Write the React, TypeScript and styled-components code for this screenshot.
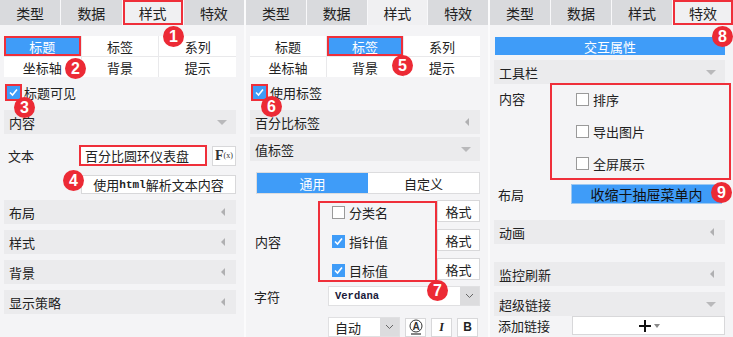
import React from 'react';
import styled, { createGlobalStyle, css } from 'styled-components';

const RED = '#ef2f3a';
const BLUE = '#3f9cf8';

const GlobalStyle = createGlobalStyle`
  body {
    margin: 0;
    background: #fbfbfc;
    font-family: 'Noto Sans CJK SC', 'Noto Sans', sans-serif;
    font-size: 13px;
    color: #222;
  }
`;

const marked = css`
  box-shadow: inset 0 0 0 2px ${RED};
`;

const Screen = styled.div`
  display: flex;
  gap: 2px;
  width: 733px;
  height: 337px;
  overflow: hidden;
`;

const Panel = styled.div<{ $w: number }>`
  position: relative;
  width: ${({ $w }) => $w}px;
  height: 337px;
  flex-shrink: 0;
  background: #f4f4f6;
  display: flex;
  flex-direction: column;
`;

const TabBar = styled.div`
  display: grid;
  grid-template-columns: repeat(4, 1fr);
  gap: 1px;
  height: 25px;
  background: #f8f8fa;
`;

const Tab = styled.div<{ $active?: boolean; $marked?: boolean }>`
  display: flex;
  align-items: center;
  justify-content: center;
  font-size: 14px;
  color: #222;
  background: ${({ $active }) => ($active ? '#f0f0f2' : '#d9dadd')};
  ${({ $marked }) => $marked && marked}
`;

const Body = styled.div`
  display: flex;
  flex-direction: column;
  padding: 0 8px 0 4px;
`;

const SubGrid = styled.div`
  display: grid;
  grid-template-columns: repeat(3, 1fr);
  grid-auto-rows: 20px;
  gap: 1px;
  margin-top: 11px;
  background: #e9e9eb;
`;

const SubTab = styled.div<{ $active?: boolean; $marked?: boolean }>`
  display: flex;
  align-items: center;
  justify-content: center;
  background: ${({ $active }) => ($active ? BLUE : '#fff')};
  color: ${({ $active }) => ($active ? '#fff' : '#222')};
  ${({ $marked }) => $marked && marked}
`;

const CheckRow = styled.label<{ $top?: number; $left?: number }>`
  display: flex;
  align-items: center;
  gap: 4px;
  height: 18px;
  margin-top: ${({ $top }) => $top ?? 0}px;
  padding-left: ${({ $left }) => $left ?? 1}px;
`;

const Box = styled.span<{ $checked?: boolean; $marked?: boolean }>`
  display: inline-flex;
  align-items: center;
  justify-content: center;
  width: 13px;
  height: 13px;
  box-sizing: border-box;
  background: ${({ $checked }) => ($checked ? BLUE : '#fff')};
  border: 1px solid ${({ $checked }) => ($checked ? BLUE : '#9a9a9a')};
  ${({ $marked }) =>
    $marked &&
    css`
      outline: 2px solid ${RED};
      outline-offset: 0;
    `}
`;

const CheckBox = ({ checked, marked: m }: { checked?: boolean; marked?: boolean }) => (
  <Box $checked={checked} $marked={m}>
    {checked && (
      <svg width="11" height="11" viewBox="0 0 11 11">
        <polyline points="2,5.5 4.5,8 9,2.5" fill="none" stroke="#fff" strokeWidth="1.6" />
      </svg>
    )}
  </Box>
);

const Header = styled.div<{ $top?: number }>`
  display: flex;
  align-items: center;
  justify-content: space-between;
  height: 24px;
  margin-top: ${({ $top }) => $top ?? 6}px;
  padding: 0 9px 0 5px;
  background: #ebebed;
  font-size: 13px;
`;

const Down = styled.span`
  width: 0;
  height: 0;
  border-left: 5px solid transparent;
  border-right: 5px solid transparent;
  border-top: 5px solid #b9b9bb;
`;

const Left = styled.span`
  width: 0;
  height: 0;
  margin-right: 2px;
  border-top: 4px solid transparent;
  border-bottom: 4px solid transparent;
  border-right: 4px solid #b0b0b2;
`;

const Section = ({ title, open, top }: { title: string; open?: boolean; top?: number }) => (
  <Header $top={top}>
    <span>{title}</span>
    {open ? <Down /> : <Left />}
  </Header>
);

const FieldRow = styled.div<{ $top?: number; $h?: number }>`
  display: flex;
  align-items: center;
  height: ${({ $h }) => $h ?? 21}px;
  margin-top: ${({ $top }) => $top ?? 0}px;
`;

const Label = styled.span<{ $w: number }>`
  width: ${({ $w }) => $w}px;
  flex-shrink: 0;
  padding-left: 4px;
  box-sizing: border-box;
`;

const TextInput = styled.div<{ $marked?: boolean }>`
  width: 128px;
  height: 21px;
  display: flex;
  align-items: center;
  padding-left: 6px;
  box-sizing: border-box;
  background: #fff;
  font-size: 13px;
  ${({ $marked }) => $marked && marked}
`;

const FxButton = styled.div`
  width: 24px;
  height: 20px;
  margin-left: 5px;
  display: flex;
  align-items: center;
  justify-content: center;
  background: #fff;
  border: 1px solid #d8d8da;
  box-sizing: border-box;
  font-family: 'Liberation Serif', serif;
  font-weight: bold;
  font-size: 14px;
  color: #333;
  small {
    font-size: 8px;
    font-weight: normal;
  }
`;

const WideButton = styled.div`
  width: 155px;
  height: 19px;
  margin: 9px 0 0 77px;
  display: flex;
  align-items: center;
  justify-content: center;
  background: #fff;
  border: 1px solid #d8d8da;
  box-sizing: border-box;
  b {
    font-family: 'Liberation Mono', monospace;
    font-size: 11px;
  }
`;

const Segmented = styled.div`
  display: grid;
  grid-template-columns: 1fr 1fr;
  height: 20px;
  margin: 11px 0 0 6px;
  border: 1px solid #dcdcde;
  background: #fff;
`;

const Segment = styled.div<{ $active?: boolean }>`
  display: flex;
  align-items: center;
  justify-content: center;
  background: ${({ $active }) => ($active ? BLUE : '#fff')};
  color: ${({ $active }) => ($active ? '#fff' : '#222')};
`;

const ContentBlock = styled.div<{ $top?: number }>`
  display: flex;
  align-items: stretch;
  margin-top: ${({ $top }) => $top ?? 0}px;
`;

const BlockLabel = styled.div<{ $w: number; $center?: boolean }>`
  width: ${({ $w }) => $w}px;
  flex-shrink: 0;
  padding: ${({ $center }) => ($center ? '0' : '6px')} 0 0 5px;
  box-sizing: border-box;
  display: flex;
  align-items: ${({ $center }) => ($center ? 'center' : 'flex-start')};
`;

const MarkedGroup = styled.div<{ $w: number; $h: number; $pad: number; $gap: number; $right?: number }>`
  width: ${({ $w }) => $w}px;
  height: ${({ $h }) => $h}px;
  margin-right: ${({ $right }) => $right ?? 0}px;
  box-sizing: border-box;
  border: 2px solid ${RED};
  display: flex;
  flex-direction: column;
  justify-content: center;
  gap: ${({ $gap }) => $gap}px;
  padding-left: ${({ $pad }) => $pad}px;
`;

const FormatColumn = styled.div`
  display: flex;
  flex-direction: column;
  gap: 7px;
  margin-top: -1px;
`;

const FormatButton = styled.div`
  width: 43px;
  height: 22px;
  display: flex;
  align-items: center;
  justify-content: center;
  background: #fff;
  border: 1px solid #d8d8da;
  box-sizing: border-box;
`;

const Select = styled.div<{ $w: number }>`
  width: ${({ $w }) => $w}px;
  height: 20px;
  display: flex;
  background: #fff;
  box-sizing: border-box;
  border: 1px solid #e0e0e2;
`;

const SelectText = styled.div<{ $mono?: boolean }>`
  flex: 1;
  display: flex;
  align-items: center;
  padding-left: 6px;
  ${({ $mono }) =>
    $mono &&
    css`
      font-family: 'Liberation Mono', monospace;
      font-weight: bold;
      font-size: 10.5px;
      color: #1a1a3a;
    `}
`;

const SelectArrow = styled.div`
  width: 19px;
  display: flex;
  align-items: center;
  justify-content: center;
  background: #dcdcde;
`;

const Chevron = () => (
  <svg width="9" height="6" viewBox="0 0 9 6">
    <polyline points="1,1 4.5,4.5 8,1" fill="none" stroke="#666" strokeWidth="1" />
  </svg>
);

const StyleButton = styled.div<{ $italic?: boolean }>`
  width: 21px;
  height: 19px;
  margin-left: 5px;
  display: flex;
  align-items: center;
  justify-content: center;
  background: #fff;
  border: 1px solid #d8d8da;
  box-sizing: border-box;
  font-weight: bold;
  font-size: 12px;
  font-family: ${({ $italic }) => ($italic ? "'Liberation Serif', serif" : "'Liberation Sans', sans-serif")};
  font-style: ${({ $italic }) => ($italic ? 'italic' : 'normal')};
`;

const BlueBar = styled.div`
  height: 18px;
  margin: 12px 0 0 1px;
  display: flex;
  align-items: center;
  justify-content: center;
  background: ${BLUE};
  color: #fff;
`;

const BlueSelect = styled.div`
  width: 151px;
  height: 20px;
  display: flex;
  align-items: center;
  justify-content: center;
  background: ${BLUE};
  border: 1px solid #9cc8f2;
  box-sizing: border-box;
  font-size: 14px;
  color: #111;
`;

const AddInput = styled.div`
  flex: 1;
  height: 19px;
  display: flex;
  align-items: center;
  justify-content: center;
  gap: 2px;
  background: #fff;
  border: 1px solid #d8d8da;
  box-sizing: border-box;
`;

const Badge = styled.div<{ $x: number; $y: number }>`
  position: absolute;
  left: ${({ $x }) => $x}px;
  top: ${({ $y }) => $y}px;
  width: 21px;
  height: 21px;
  border-radius: 50%;
  background: #ec2a35;
  color: #fff;
  display: flex;
  align-items: center;
  justify-content: center;
  font-family: 'Liberation Sans', sans-serif;
  font-weight: bold;
  font-size: 16px;
`;

const Tabs = ({ active, mark }: { active: number; mark?: boolean }) => (
  <TabBar>
    {['类型', '数据', '样式', '特效'].map((t, i) => (
      <Tab key={t} $active={i === active} $marked={mark && i === active}>
        {t}
      </Tab>
    ))}
  </TabBar>
);

const SubTabs = ({ active }: { active: number }) => (
  <SubGrid>
    {['标题', '标签', '系列', '坐标轴', '背景', '提示'].map((t, i) => (
      <SubTab key={t} $active={i === active} $marked={i === active}>
        {t}
      </SubTab>
    ))}
  </SubGrid>
);

const FontIcon = () => (
  <svg width="16" height="16" viewBox="0 0 16 16">
    <circle cx="8" cy="7" r="6" fill="none" stroke="#333" strokeWidth="1" />
    <text x="8" y="10.5" textAnchor="middle" fontSize="10" fontFamily="Liberation Sans" fill="#333">
      A
    </text>
    <line x1="3" y1="15" x2="13" y2="15" stroke="#333" strokeWidth="1.2" />
  </svg>
);

const PlusIcon = () => (
  <svg width="14" height="14" viewBox="0 0 14 14">
    <path d="M7 1v12M1 7h12" stroke="#111" strokeWidth="2" />
  </svg>
);

const TinyDown = () => (
  <svg width="6" height="4" viewBox="0 0 6 4">
    <path d="M0 0h6L3 4z" fill="#888" />
  </svg>
);

export default function App() {
  return (
    <>
      <GlobalStyle />
      <Screen>
        <Panel $w={244}>
          <Tabs active={2} mark />
          <Body>
            <SubTabs active={0} />
            <CheckRow $top={6} $left={3}>
              <CheckBox checked marked />
              <span>标题可见</span>
            </CheckRow>
            <Section title="内容" open top={9} />
            <FieldRow $top={11}>
              <Label $w={75}>文本</Label>
              <TextInput $marked>百分比圆环仪表盘</TextInput>
              <FxButton>
                F<small>(x)</small>
              </FxButton>
            </FieldRow>
            <WideButton>
              使用<b>html</b>解析文本内容
            </WideButton>
            <Section title="布局" />
            <Section title="样式" />
            <Section title="背景" />
            <Section title="显示策略" />
          </Body>
          <Badge $x={163} $y={26}>1</Badge>
          <Badge $x={65} $y={58}>2</Badge>
          <Badge $x={14} $y={97}>3</Badge>
          <Badge $x={63} $y={170}>4</Badge>
        </Panel>

        <Panel $w={242}>
          <Tabs active={2} />
          <Body>
            <SubTabs active={1} />
            <CheckRow $top={6} $left={3}>
              <CheckBox checked marked />
              <span>使用标签</span>
            </CheckRow>
            <Section title="百分比标签" top={9} />
            <Section title="值标签" open top={3} />
            <Segmented>
              <Segment $active>通用</Segment>
              <Segment>自定义</Segment>
            </Segmented>
            <ContentBlock $top={7}>
              <BlockLabel $w={68} $center>
                内容
              </BlockLabel>
              <MarkedGroup $w={121} $h={81} $pad={11} $gap={11}>
                <CheckRow>
                  <CheckBox />
                  <span>分类名</span>
                </CheckRow>
                <CheckRow>
                  <CheckBox checked />
                  <span>指针值</span>
                </CheckRow>
                <CheckRow>
                  <CheckBox checked />
                  <span>目标值</span>
                </CheckRow>
              </MarkedGroup>
              <FormatColumn>
                <FormatButton>格式</FormatButton>
                <FormatButton>格式</FormatButton>
                <FormatButton>格式</FormatButton>
              </FormatColumn>
            </ContentBlock>
            <FieldRow $top={4} $h={20}>
              <Label $w={78}>字符</Label>
              <Select $w={154}>
                <SelectText $mono>Verdana</SelectText>
                <SelectArrow>
                  <Chevron />
                </SelectArrow>
              </Select>
            </FieldRow>
            <FieldRow $top={11} $h={20}>
              <Label $w={78} />
              <Select $w={72}>
                <SelectText>自动</SelectText>
                <SelectArrow>
                  <Chevron />
                </SelectArrow>
              </Select>
              <StyleButton>
                <FontIcon />
              </StyleButton>
              <StyleButton $italic>I</StyleButton>
              <StyleButton>B</StyleButton>
            </FieldRow>
          </Body>
          <Badge $x={146} $y={55}>5</Badge>
          <Badge $x={15} $y={96}>6</Badge>
          <Badge $x={181} $y={280}>7</Badge>
        </Panel>

        <Panel $w={243}>
          <Tabs active={3} mark />
          <Body>
            <BlueBar>交互属性</BlueBar>
            <Section title="工具栏" open top={5} />
            <ContentBlock $top={-1}>
              <BlockLabel $w={56}>内容</BlockLabel>
              <MarkedGroup $w={182} $h={97} $pad={23} $gap={14} $right={-6}>
                <CheckRow>
                  <CheckBox />
                  <span>排序</span>
                </CheckRow>
                <CheckRow>
                  <CheckBox />
                  <span>导出图片</span>
                </CheckRow>
                <CheckRow>
                  <CheckBox />
                  <span>全屏展示</span>
                </CheckRow>
              </MarkedGroup>
            </ContentBlock>
            <FieldRow $top={4} $h={20}>
              <Label $w={77}>布局</Label>
              <BlueSelect>收缩于抽屉菜单内</BlueSelect>
            </FieldRow>
            <Section title="动画" top={16} />
            <Section title="监控刷新" top={18} />
            <Section title="超级链接" open />
            <FieldRow $h={19}>
              <Label $w={78}>添加链接</Label>
              <AddInput>
                <PlusIcon />
                <TinyDown />
              </AddInput>
            </FieldRow>
          </Body>
          <Badge $x={222} $y={26}>8</Badge>
          <Badge $x={221} $y={182}>9</Badge>
        </Panel>
      </Screen>
    </>
  );
}
